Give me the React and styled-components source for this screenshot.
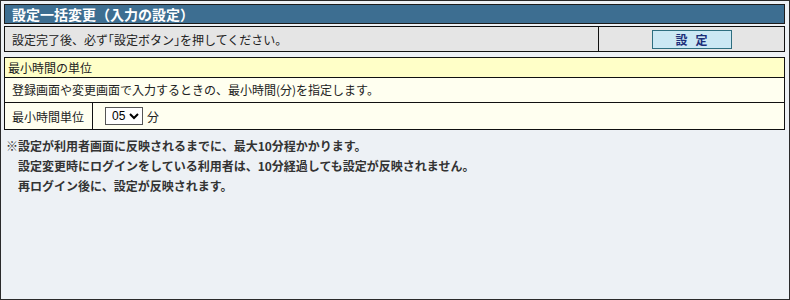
import React from "react";
import styled, { createGlobalStyle } from "styled-components";

const Global = createGlobalStyle`
  html, body { margin: 0; padding: 0; }
  body {
    font-family: "Noto Sans CJK JP", "Noto Sans", sans-serif;
    font-size: 12px;
    color: #222;
  }
`;

const Page = styled.div`
  width: 790px;
  height: 300px;
  box-sizing: border-box;
  border: 1px solid #2a2a2a;
  background: #edf1f5;
  padding: 3px 4px 0 3px;
  display: flex;
  flex-direction: column;
`;

const TitleBar = styled.div`
  height: 20px;
  box-sizing: border-box;
  border: 1px solid #1c1c1c;
  background: #3d6e91;
  color: #fff;
  font-weight: bold;
  font-size: 14px;
  line-height: 18px;
  padding-left: 7px;
`;

const ActionRow = styled.div`
  margin-top: 2px;
  height: 26px;
  box-sizing: border-box;
  border: 1px solid #111;
  background: #e5e5e5;
  display: grid;
  grid-template-columns: 594px 1fr;
`;

const ActionText = styled.div`
  display: flex;
  align-items: center;
  padding-left: 7px;
  border-right: 1px solid #111;
`;

const ActionCell = styled.div`
  display: flex;
  align-items: center;
  justify-content: center;
`;

const SetButton = styled.button`
  width: 80px;
  height: 19px;
  box-sizing: border-box;
  border: 1px solid #2d6e80;
  background: #cbe8f4;
  color: #1c2f7a;
  font-family: inherit;
  font-weight: bold;
  font-size: 12px;
  letter-spacing: 8px;
  padding: 0 0 0 8px;
  line-height: 17px;
`;

const SettingBox = styled.div`
  margin-top: 5px;
  border: 1px solid #111;
  background: #fffff0;
`;

const BoxHeader = styled.div`
  height: 19px;
  line-height: 19px;
  background: #ffffc8;
  padding-left: 3px;
  border-bottom: 1px solid #111;
`;

const BoxDesc = styled.div`
  height: 24px;
  line-height: 24px;
  padding-left: 7px;
  border-bottom: 1px solid #111;
`;

const FieldRow = styled.div`
  display: grid;
  grid-template-columns: 88px 1fr;
  height: 26px;
`;

const FieldLabel = styled.div`
  display: flex;
  align-items: center;
  padding-left: 7px;
  border-right: 1px solid #111;
`;

const FieldValue = styled.div`
  display: flex;
  align-items: center;
  gap: 4px;
  padding-left: 12px;
`;

const Select = styled.select`
  height: 18px;
  font-family: "Liberation Sans", sans-serif;
  font-size: 12px;
  border: 1px solid #555;
  background: #fff;
  padding: 0 0 0 2px;
  border-radius: 0;
`;

const Notes = styled.div`
  margin-top: 6px;
  padding-left: 2px;
  font-weight: bold;
  color: #333;
  line-height: 20px;
`;

const NoteLine = styled.div`
  padding-left: ${(p) => (p.$indent ? "12px" : "0")};
`;

export default function App() {
  return (
    <Page>
      <Global />
      <TitleBar>設定一括変更（入力の設定）</TitleBar>
      <ActionRow>
        <ActionText>設定完了後、必ず｢設定ボタン｣を押してください。</ActionText>
        <ActionCell>
          <SetButton>設定</SetButton>
        </ActionCell>
      </ActionRow>
      <SettingBox>
        <BoxHeader>最小時間の単位</BoxHeader>
        <BoxDesc>登録画面や変更画面で入力するときの、最小時間(分)を指定します。</BoxDesc>
        <FieldRow>
          <FieldLabel>最小時間単位</FieldLabel>
          <FieldValue>
            <Select defaultValue="05">
              <option value="01">01</option>
              <option value="05">05</option>
              <option value="10">10</option>
              <option value="15">15</option>
              <option value="30">30</option>
            </Select>
            分
          </FieldValue>
        </FieldRow>
      </SettingBox>
      <Notes>
        <NoteLine>※設定が利用者画面に反映されるまでに、最大10分程かかります。</NoteLine>
        <NoteLine $indent>設定変更時にログインをしている利用者は、10分経過しても設定が反映されません。</NoteLine>
        <NoteLine $indent>再ログイン後に、設定が反映されます。</NoteLine>
      </Notes>
    </Page>
  );
}
